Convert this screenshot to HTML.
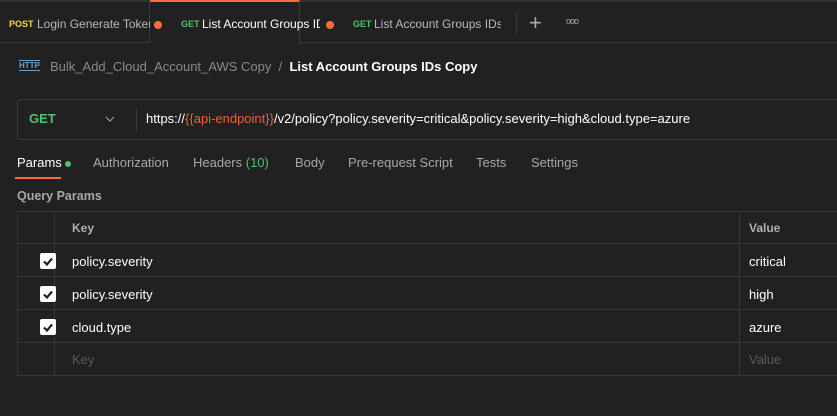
<html><head><style>
*{margin:0;padding:0;box-sizing:border-box}
body{width:837px;height:416px;background:#212121;font-family:"Liberation Sans",sans-serif;position:relative;overflow:hidden;color:#fff;font-size:13px}
.a{position:absolute;white-space:nowrap}
.tabs{position:absolute;left:0;top:0;width:837px;height:43px;border-top:2px solid #333;border-bottom:1px solid #3a3a3a;background:#212121}
.tab{position:absolute;top:0;height:41px;border-right:1px solid #3a3a3a}
.tx{position:absolute;top:15px;font-size:12px;color:#b8b8b8;white-space:nowrap;overflow:hidden;line-height:15px}
.m{position:absolute;top:17px;font-size:9px;font-weight:bold;line-height:11px}
.dot{position:absolute;width:8px;height:8px;border-radius:50%;background:#ff6c37;top:19px}
.row{position:absolute;left:17px;width:830px;height:33px;border:1px solid #363636;border-top:none}
.cb{position:absolute;width:16px;height:16px;background:#fff;border-radius:2px}
</style></head><body>
<div class="tabs">
<div class="tab" style="left:0;width:150px"></div>
<div class="tab" style="left:150px;width:150px;border-top:2px solid #ff6c37;top:-2px;height:45px;background:#212121"></div>
<div class="m" style="left:9px;color:#f5d547">POST</div>
<div class="tx" style="left:37px;width:113px">Login Generate Token</div>
<div class="dot" style="left:154px"></div>
<div class="m" style="left:181px;color:#4fc36a">GET</div>
<div class="tx" style="left:202px;width:118px;color:#fff">List Account Groups IDs Copy</div>
<div class="dot" style="left:326px"></div>
<div class="m" style="left:353px;color:#4fc36a">GET</div>
<div class="tx" style="left:374px;width:127px">List Account Groups IDs</div>
<div class="a" style="left:516px;top:10px;width:1px;height:22px;background:#3a3a3a"></div>
<div class="a" style="left:529px;top:8px;font-size:22px;color:#aaa;font-weight:300;line-height:26px">+</div>
<div class="a" style="left:566px;top:14px;font-size:9px;color:#aaa;letter-spacing:-1px">ooo</div>
</div>
<div class="a" style="left:19px;top:60px;font-size:8px;color:#6aa0c8;font-weight:bold;border-top:1px solid #6aa0c8;border-bottom:1px solid #6aa0c8;line-height:9px">HTTP</div>
<div class="a" style="left:50px;top:59px;font-size:13px;color:#8a8a8a">Bulk_Add_Cloud_Account_AWS Copy&nbsp; /&nbsp; <span style="color:#fff;font-weight:bold">List Account Groups IDs Copy</span></div>
<div class="a" style="left:17px;top:99px;width:830px;height:41px;border:1px solid #3d3d3d;border-radius:4px"></div>
<div class="a" style="left:29px;top:111px;font-weight:bold;color:#4fc36a;font-size:13px">GET</div>
<svg class="a" style="left:105px;top:115px" width="10" height="8"><path d="M1 2l4 4 4-4" fill="none" stroke="#999" stroke-width="1.2"/></svg>
<div class="a" style="left:136px;top:109px;width:1px;height:22px;background:#3d3d3d"></div>
<div class="a" style="left:146px;top:111px;font-size:13px">https://<span style="color:#e5652e">{{api-endpoint}}</span>/v2/policy?policy.severity=critical&amp;policy.severity=high&amp;cloud.type=azure</div>
<div class="a" style="left:17px;top:155px;font-size:13px">Params <span style="display:inline-block;width:6px;height:6px;border-radius:50%;background:#4fc36a;vertical-align:middle"></span></div>
<div class="a" style="left:15px;top:177px;width:46px;height:2px;background:#ff6c37"></div>
<div class="a" style="left:93px;top:155px;color:#a8a8a8">Authorization</div>
<div class="a" style="left:193px;top:155px;color:#a8a8a8">Headers <span style="color:#4fc36a">(10)</span></div>
<div class="a" style="left:295px;top:155px;color:#a8a8a8">Body</div>
<div class="a" style="left:348px;top:155px;color:#a8a8a8">Pre-request Script</div>
<div class="a" style="left:476px;top:155px;color:#a8a8a8">Tests</div>
<div class="a" style="left:531px;top:155px;color:#a8a8a8">Settings</div>
<div class="a" style="left:17px;top:189px;color:#a8a8a8;font-weight:bold;font-size:12.5px">Query Params</div>
<div class="row" style="top:211px;border-top:1px solid #363636"></div>
<div class="row" style="top:244px"></div><div class="row" style="top:277px"></div><div class="row" style="top:310px"></div><div class="row" style="top:343px"></div>
<div class="a" style="left:54px;top:211px;width:1px;height:165px;background:#363636"></div>
<div class="a" style="left:739px;top:211px;width:1px;height:165px;background:#363636"></div>
<div class="a" style="left:72px;top:221px;color:#b0b0b0;font-weight:bold;font-size:12px">Key</div>
<div class="a" style="left:749px;top:221px;color:#b0b0b0;font-weight:bold;font-size:12px">Value</div>
<div class="cb" style="top:253px;left:40px"></div>
<div class="cb" style="top:286px;left:40px"></div>
<div class="cb" style="top:319px;left:40px"></div>
<svg class="a" style="left:40px;top:253px" width="16" height="82"><g fill="none" stroke="#212121" stroke-width="2.2"><path d="M4 8.5l3 3 5-6"/><path d="M4 41.5l3 3 5-6"/><path d="M4 74.5l3 3 5-6"/></g></svg>
<div class="a" style="left:72px;top:254px">policy.severity</div><div class="a" style="left:749px;top:254px">critical</div>
<div class="a" style="left:72px;top:287px">policy.severity</div><div class="a" style="left:749px;top:287px">high</div>
<div class="a" style="left:72px;top:320px">cloud.type</div><div class="a" style="left:749px;top:320px">azure</div>
<div class="a" style="left:72px;top:352px;color:#5a5a5a">Key</div><div class="a" style="left:749px;top:352px;color:#5a5a5a">Value</div>
</body></html>
